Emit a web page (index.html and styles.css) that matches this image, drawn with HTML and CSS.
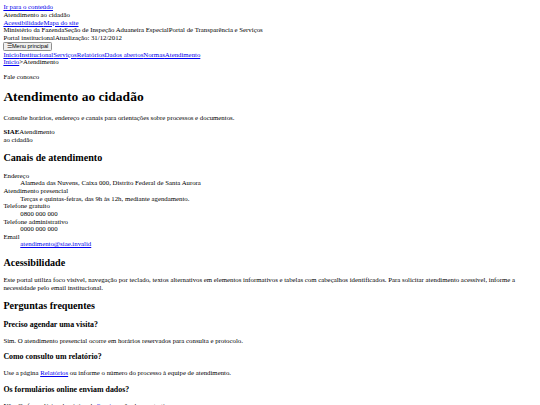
FILE: index.html
```html
<!DOCTYPE html>
<html lang="pt-BR">
<head>
<meta charset="utf-8">
<title>Atendimento ao cidadão</title>
<link rel="stylesheet" href="styles.css">
</head>
<body class="page">
<a class="skip" href="#conteudo">Ir para o conteúdo</a>
<header class="site-header">
  <div class="top-title">Atendimento ao cidadão</div>
  <div class="utility"><a href="#acessibilidade">Acessibilidade</a><a href="#mapa">Mapa do site</a></div>
  <div class="org"><span>Ministério da Fazenda</span><span>Seção de Inspeção Aduaneira Especial</span><span>Portal de Transparência e Serviços</span></div>
  <div class="meta"><span>Portal institucional</span><span>Atualização: 31/12/2012</span></div>
  <button class="menu-btn" type="button">☰Menu principal</button>
  <nav class="main-nav"><a href="#inicio">Início</a><a href="#institucional">Institucional</a><a href="#servicos">Serviços</a><a href="#relatorios">Relatórios</a><a href="#dados">Dados abertos</a><a href="#normas">Normas</a><a href="#atendimento">Atendimento</a></nav>
  <div class="crumbs"><a href="#inicio">Início</a><span>&gt;</span><span>Atendimento</span></div>
</header>
<main id="conteudo" class="content">
  <p class="text">Fale conosco</p>
  <h1 class="title">Atendimento ao cidadão</h1>
  <p class="text">Consulte horários, endereço e canais para orientações sobre processos e documentos.</p>
  <div class="brand"><strong>SIAE</strong><span>Atendimento<br>ao cidadão</span></div>
  <h2 class="section-title">Canais de atendimento</h2>
  <dl class="channels">
    <dt>Endereço</dt><dd>Alameda das Nuvens, Caixa 000, Distrito Federal de Santa Aurora</dd>
    <dt>Atendimento presencial</dt><dd>Terças e quintas-feiras, das 9h às 12h, mediante agendamento.</dd>
    <dt>Telefone gratuito</dt><dd>0800 000 000</dd>
    <dt>Telefone administrativo</dt><dd>0000 000 000</dd>
    <dt>Email</dt><dd><a href="#email">atendimento@siae.invalid</a></dd>
  </dl>
  <h2 id="acessibilidade" class="section-title">Acessibilidade</h2>
  <p class="text">Este portal utiliza foco visível, navegação por teclado, textos alternativos em elementos informativos e tabelas com cabeçalhos identificados. Para solicitar atendimento acessível, informe a necessidade pelo email institucional.</p>
  <h2 class="section-title">Perguntas frequentes</h2>
  <h3 class="faq-q">Preciso agendar uma visita?</h3>
  <p class="text">Sim. O atendimento presencial ocorre em horários reservados para consulta e protocolo.</p>
  <h3 class="faq-q">Como consulto um relatório?</h3>
  <p class="text">Use a página <a href="#relatorios">Relatórios</a> ou informe o número do processo à equipe de atendimento.</p>
  <h3 class="faq-q">Os formulários online enviam dados?</h3>
  <p class="text">Não. Os formulários da página de <a href="#servicos">Serviços</a> são demonstrativos.</p>
</main>
</body>
</html>
```
FILE: styles.css
```css
.page {
  margin: 3.375px;
  font-family: "Liberation Serif", "Times New Roman", serif;
  font-size: 6.8px;
  line-height: 7.66px;
  color: #000;
  background: #fff;
}
.page a {
  color: #0000ee;
}
.menu-btn {
  display: inline-block;
  font-family: "Liberation Sans", Arial, sans-serif;
  font-size: 5.625px;
  line-height: 6.4px;
  padding: 0.5px 2.5px;
  margin: 0;
  height: 8.9px;
  background: #efefef;
  color: #000;
  border: 0.8px solid #8f8f8f;
  border-radius: 1.3px;
  vertical-align: top;
}
.text {
  margin: 6.75px 0;
}
.title {
  font-size: 13.5px;
  line-height: 15.3px;
  margin: 9px 0;
}
.section-title {
  font-size: 10.125px;
  line-height: 11.5px;
  margin: 8.4px 0;
}
.faq-q {
  font-size: 7.9px;
  line-height: 9px;
  margin: 7.9px 0;
}
.channels {
  margin: 6.75px 0;
}
.channels dd {
  margin-left: 16.875px;
}
```
